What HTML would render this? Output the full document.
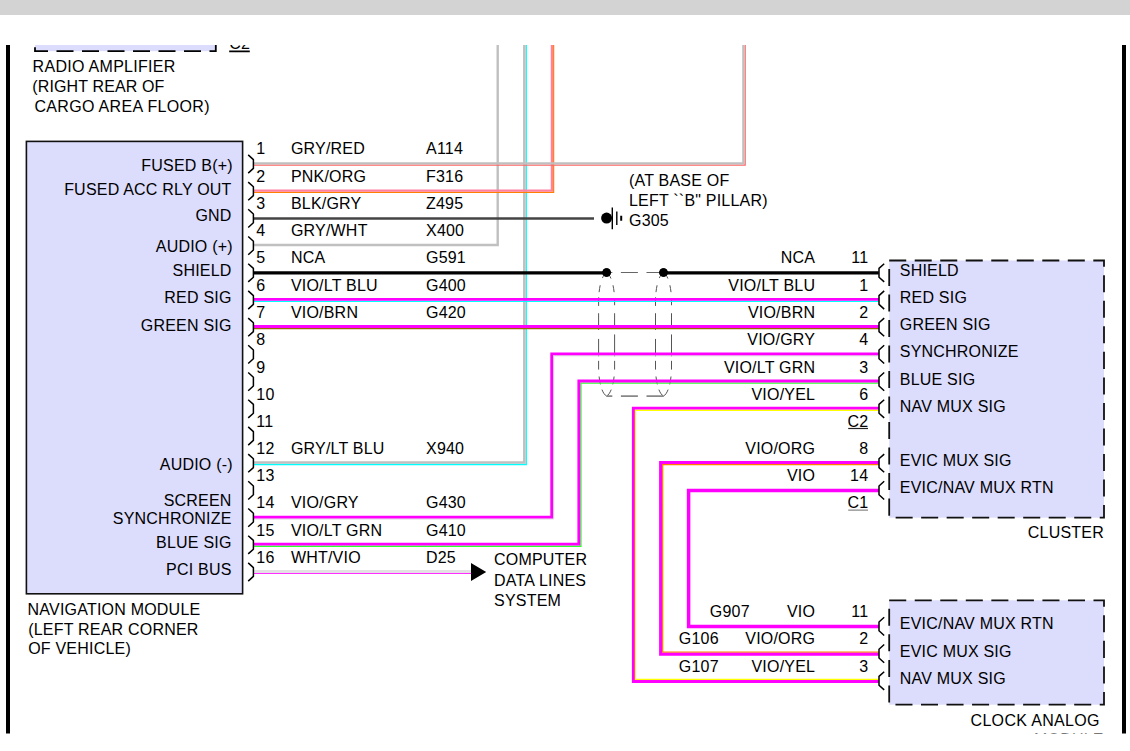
<!DOCTYPE html>
<html><head><meta charset="utf-8"><title>Wiring diagram</title>
<style>
html,body{margin:0;padding:0;background:#fff;}
body{width:1130px;height:751px;position:relative;overflow:hidden;font-family:"Liberation Sans",sans-serif;}
svg text{white-space:pre;letter-spacing:0.21px;}
</style></head><body>
<svg width="1130" height="751" viewBox="0 0 1130 751" style="position:absolute;left:0;top:0">
<defs><clipPath id="c"><rect x="0" y="45.0" width="1130" height="688.6"/></clipPath></defs>
<rect x="0" y="0" width="1130" height="15" fill="#d3d3d3"/>
<g clip-path="url(#c)" font-family="'Liberation Sans', sans-serif" font-size="16px" fill="#000">
<rect x="6" y="40" width="4" height="700" fill="#000"/>
<rect x="1122" y="40" width="4" height="700" fill="#000"/>
<rect x="35.0" y="40" width="180.8" height="11.20" fill="#dcdcfc"/>
<path d="M35.0,43 L35.0,51.2 L215.8,51.2 L215.8,40" fill="none" stroke="#000" stroke-width="1.8" stroke-dasharray="17 8.5" stroke-dashoffset="-4.2"/>
<rect x="26.4" y="141.4" width="216.2" height="452.4" fill="#dcdcfc" stroke="#111" stroke-width="1.6"/>
<rect x="889.20" y="260.50" width="214.80" height="257.20" fill="#dcdcfc"/>
<path d="M889.20,260.50 L1104.00,260.50 L1104.00,517.70 L889.20,517.70 L889.20,260.50" fill="none" stroke="#111" stroke-width="1.8" pathLength="37" stroke-dasharray="0.667 0.333"/>
<rect x="889.20" y="600.30" width="214.80" height="104.40" fill="#dcdcfc"/>
<path d="M889.20,600.30 L1104.00,600.30 L1104.00,704.70 L889.20,704.70 L889.20,600.30" fill="none" stroke="#111" stroke-width="1.8" pathLength="25" stroke-dasharray="0.667 0.333"/>
<path d="M606.60,272.60 C602.10,275.10 599.00,285.60 598.60,299.60 L598.60,369.10 C599.00,383.10 602.10,393.60 606.60,396.10" fill="none" stroke="#555" stroke-width="1" stroke-dasharray="7.15 7.54 6.90 5.12 8.53 7.30 16.68 9.03 17.38 4.52 8.76 6.79 7.90 5.44 8.44 50.00"/>
<path d="M606.60,272.60 C611.10,275.10 614.20,285.60 614.60,299.60 L614.60,369.10 C614.20,383.10 611.10,393.60 606.60,396.10" fill="none" stroke="#555" stroke-width="1" stroke-dasharray="7.66 7.03 6.90 5.94 7.02 7.99 12.51 8.69 21.89 4.52 8.76 6.79 7.90 5.44 8.44 50.00"/>
<path d="M663.50,272.60 C659.00,275.10 655.90,285.60 655.50,299.60 L655.50,369.10 C655.90,383.10 659.00,393.60 663.50,396.10" fill="none" stroke="#555" stroke-width="1" stroke-dasharray="7.15 7.54 6.90 5.12 8.53 7.30 16.68 9.03 17.38 4.52 8.76 6.79 7.90 5.44 8.44 50.00"/>
<path d="M663.50,272.60 C668.00,275.10 671.10,285.60 671.50,299.60 L671.50,369.10 C671.10,383.10 668.00,393.60 663.50,396.10" fill="none" stroke="#555" stroke-width="1" stroke-dasharray="7.66 7.03 6.90 5.94 7.02 7.99 12.51 8.69 21.89 4.52 8.76 6.79 7.90 5.44 8.44 50.00"/>
<path d="M663.5,272.5 H606.6" stroke="#666" stroke-width="1.2" stroke-dasharray="17 8.6"/>
<path d="M663.5,396.1 H606.6" stroke="#888" stroke-width="1.8" stroke-dasharray="17 8.6"/>
<circle cx="606.6" cy="272.5" r="4.3" fill="#000"/>
<circle cx="663.5" cy="272.5" r="4.3" fill="#000"/>
<polyline points="253.50,246.80 499.50,246.80 499.50,40.00" fill="none" stroke="#ffffff" stroke-width="1.20" stroke-linejoin="miter" />
<polyline points="253.50,245.00 497.70,245.00 497.70,40.00" fill="none" stroke="#c0c0c0" stroke-width="2.40" stroke-linejoin="miter" />
<polyline points="253.50,464.50 526.30,464.50 526.30,40.00" fill="none" stroke="#00ffff" stroke-width="1.30" stroke-linejoin="miter" />
<polyline points="253.50,462.55 524.35,462.55 524.35,40.00" fill="none" stroke="#c0c0c0" stroke-width="2.60" stroke-linejoin="miter" />
<polyline points="253.50,192.35 553.65,192.35 553.65,40.00" fill="none" stroke="#ff8000" stroke-width="1.20" stroke-linejoin="miter" />
<polyline points="253.50,190.60 551.90,190.60 551.90,40.00" fill="none" stroke="#ff80a0" stroke-width="2.30" stroke-linejoin="miter" />
<polyline points="253.50,165.15 745.15,165.15 745.15,40.00" fill="none" stroke="#ff6464" stroke-width="1.30" stroke-linejoin="miter" />
<polyline points="253.50,163.35 743.35,163.35 743.35,40.00" fill="none" stroke="#c0c0c0" stroke-width="2.30" stroke-linejoin="miter" />
<polyline points="253.50,218.40 594.00,218.40" fill="none" stroke="#444444" stroke-width="2.50" stroke-linejoin="miter" />
<polyline points="253.50,272.80 606.60,272.80" fill="none" stroke="#000" stroke-width="3.20" stroke-linejoin="miter" />
<polyline points="663.50,272.80 878.80,272.80" fill="none" stroke="#000" stroke-width="3.20" stroke-linejoin="miter" />
<polyline points="253.50,301.40 878.80,301.40" fill="none" stroke="#00ffff" stroke-width="1.40" stroke-linejoin="miter" />
<polyline points="253.50,299.30 878.80,299.30" fill="none" stroke="#ff00ff" stroke-width="2.80" stroke-linejoin="miter" />
<polyline points="253.50,328.60 878.80,328.60" fill="none" stroke="#996600" stroke-width="1.40" stroke-linejoin="miter" />
<polyline points="253.50,326.50 878.80,326.50" fill="none" stroke="#ff00ff" stroke-width="2.80" stroke-linejoin="miter" />
<polyline points="253.50,519.00 553.60,519.00 553.60,355.80 878.80,355.80" fill="none" stroke="#d8d8d8" stroke-width="1.00" stroke-linejoin="miter" />
<polyline points="253.50,517.10 551.70,517.10 551.70,353.90 878.80,353.90" fill="none" stroke="#ff00ff" stroke-width="2.80" stroke-linejoin="miter" />
<polyline points="253.50,546.25 580.95,546.25 580.95,383.05 878.80,383.05" fill="none" stroke="#30ff30" stroke-width="1.30" stroke-linejoin="miter" />
<polyline points="253.50,544.15 578.85,544.15 578.85,380.95 878.80,380.95" fill="none" stroke="#ff00ff" stroke-width="2.90" stroke-linejoin="miter" />
<polyline points="253.50,573.30 472.00,573.30" fill="none" stroke="#ff30ff" stroke-width="1.30" stroke-linejoin="miter" />
<polyline points="253.50,571.35 472.00,571.35" fill="none" stroke="#e2e2e2" stroke-width="2.60" stroke-linejoin="miter" />
<polyline points="878.80,679.35 635.45,679.35 635.45,410.25 878.80,410.25" fill="none" stroke="#ffff00" stroke-width="1.30" stroke-linejoin="miter" />
<polyline points="878.80,681.45 633.35,681.45 633.35,408.15 878.80,408.15" fill="none" stroke="#ff00ff" stroke-width="2.90" stroke-linejoin="miter" />
<polyline points="878.80,652.15 662.65,652.15 662.65,464.65 878.80,464.65" fill="none" stroke="#ff8000" stroke-width="1.30" stroke-linejoin="miter" />
<polyline points="878.80,654.25 660.55,654.25 660.55,462.55 878.80,462.55" fill="none" stroke="#ff00ff" stroke-width="2.90" stroke-linejoin="miter" />
<polyline points="878.80,626.40 688.60,626.40 688.60,490.40 878.80,490.40" fill="none" stroke="#ff00ff" stroke-width="3.50" stroke-linejoin="miter" />
<circle cx="606.6" cy="272.5" r="4.3" fill="#000"/>
<circle cx="663.5" cy="272.5" r="4.3" fill="#000"/>
<circle cx="606.6" cy="218.1" r="5.5" fill="#000"/>
<path d="M612.3,207.5V229.2" stroke="#000" stroke-width="1.4"/>
<path d="M616.8,211.5V224.9" stroke="#000" stroke-width="1.4"/>
<path d="M621.2,215.8V220.8" stroke="#000" stroke-width="2"/>
<path d="M248.2,154.90 L253.4,159.60 L253.4,168.40 L248.2,173.10" fill="none" stroke="#000" stroke-width="1.5" stroke-linejoin="round"/>
<path d="M248.2,182.10 L253.4,186.80 L253.4,195.60 L248.2,200.30" fill="none" stroke="#000" stroke-width="1.5" stroke-linejoin="round"/>
<path d="M248.2,209.30 L253.4,214.00 L253.4,222.80 L248.2,227.50" fill="none" stroke="#000" stroke-width="1.5" stroke-linejoin="round"/>
<path d="M248.2,236.50 L253.4,241.20 L253.4,250.00 L248.2,254.70" fill="none" stroke="#000" stroke-width="1.5" stroke-linejoin="round"/>
<path d="M248.2,263.70 L253.4,268.40 L253.4,277.20 L248.2,281.90" fill="none" stroke="#000" stroke-width="1.5" stroke-linejoin="round"/>
<path d="M248.2,290.90 L253.4,295.60 L253.4,304.40 L248.2,309.10" fill="none" stroke="#000" stroke-width="1.5" stroke-linejoin="round"/>
<path d="M248.2,318.10 L253.4,322.80 L253.4,331.60 L248.2,336.30" fill="none" stroke="#000" stroke-width="1.5" stroke-linejoin="round"/>
<path d="M248.2,345.30 L253.4,350.00 L253.4,358.80 L248.2,363.50" fill="none" stroke="#000" stroke-width="1.5" stroke-linejoin="round"/>
<path d="M248.2,372.50 L253.4,377.20 L253.4,386.00 L248.2,390.70" fill="none" stroke="#000" stroke-width="1.5" stroke-linejoin="round"/>
<path d="M248.2,399.70 L253.4,404.40 L253.4,413.20 L248.2,417.90" fill="none" stroke="#000" stroke-width="1.5" stroke-linejoin="round"/>
<path d="M248.2,426.90 L253.4,431.60 L253.4,440.40 L248.2,445.10" fill="none" stroke="#000" stroke-width="1.5" stroke-linejoin="round"/>
<path d="M248.2,454.10 L253.4,458.80 L253.4,467.60 L248.2,472.30" fill="none" stroke="#000" stroke-width="1.5" stroke-linejoin="round"/>
<path d="M248.2,481.30 L253.4,486.00 L253.4,494.80 L248.2,499.50" fill="none" stroke="#000" stroke-width="1.5" stroke-linejoin="round"/>
<path d="M248.2,508.50 L253.4,513.20 L253.4,522.00 L248.2,526.70" fill="none" stroke="#000" stroke-width="1.5" stroke-linejoin="round"/>
<path d="M248.2,535.70 L253.4,540.40 L253.4,549.20 L248.2,553.90" fill="none" stroke="#000" stroke-width="1.5" stroke-linejoin="round"/>
<path d="M248.2,562.90 L253.4,567.60 L253.4,576.40 L248.2,581.10" fill="none" stroke="#000" stroke-width="1.5" stroke-linejoin="round"/>
<path d="M884.2,263.70 L879.0,268.40 L879.0,277.20 L884.2,281.90" fill="none" stroke="#000" stroke-width="1.5" stroke-linejoin="round"/>
<path d="M884.2,290.90 L879.0,295.60 L879.0,304.40 L884.2,309.10" fill="none" stroke="#000" stroke-width="1.5" stroke-linejoin="round"/>
<path d="M884.2,318.10 L879.0,322.80 L879.0,331.60 L884.2,336.30" fill="none" stroke="#000" stroke-width="1.5" stroke-linejoin="round"/>
<path d="M884.2,345.30 L879.0,350.00 L879.0,358.80 L884.2,363.50" fill="none" stroke="#000" stroke-width="1.5" stroke-linejoin="round"/>
<path d="M884.2,372.50 L879.0,377.20 L879.0,386.00 L884.2,390.70" fill="none" stroke="#000" stroke-width="1.5" stroke-linejoin="round"/>
<path d="M884.2,399.70 L879.0,404.40 L879.0,413.20 L884.2,417.90" fill="none" stroke="#000" stroke-width="1.5" stroke-linejoin="round"/>
<path d="M884.2,454.10 L879.0,458.80 L879.0,467.60 L884.2,472.30" fill="none" stroke="#000" stroke-width="1.5" stroke-linejoin="round"/>
<path d="M884.2,481.30 L879.0,486.00 L879.0,494.80 L884.2,499.50" fill="none" stroke="#000" stroke-width="1.5" stroke-linejoin="round"/>
<path d="M884.2,617.30 L879.0,622.00 L879.0,630.80 L884.2,635.50" fill="none" stroke="#000" stroke-width="1.5" stroke-linejoin="round"/>
<path d="M884.2,644.50 L879.0,649.20 L879.0,658.00 L884.2,662.70" fill="none" stroke="#000" stroke-width="1.5" stroke-linejoin="round"/>
<path d="M884.2,671.70 L879.0,676.40 L879.0,685.20 L884.2,689.90" fill="none" stroke="#000" stroke-width="1.5" stroke-linejoin="round"/>
<path d="M471.0,563.0 L486.2,572.0 L471.0,581.0 Z" fill="#000"/>
<text x="229.2" y="49.4">C2</text>
<path d="M229.2,51.3 H249.8" stroke="#000" stroke-width="1.8"/>
<text x="32.6" y="72.0" style="letter-spacing:0.29px">RADIO AMPLIFIER</text>
<text x="32.3" y="91.9" style="letter-spacing:0.13px">(RIGHT REAR OF</text>
<text x="34.4" y="111.8" style="letter-spacing:0.33px">CARGO AREA FLOOR)</text>
<text x="232.8" y="170.6" text-anchor="end">FUSED B(+)</text>
<text x="231.6" y="194.6" text-anchor="end">FUSED ACC RLY OUT</text>
<text x="231.6" y="221.4" text-anchor="end">GND</text>
<text x="232.8" y="252.0" text-anchor="end">AUDIO (+)</text>
<text x="231.6" y="275.8" text-anchor="end">SHIELD</text>
<text x="231.6" y="302.8" text-anchor="end">RED SIG</text>
<text x="231.6" y="330.6" text-anchor="end">GREEN SIG</text>
<text x="232.8" y="469.8" text-anchor="end">AUDIO (-)</text>
<text x="231.6" y="505.6" text-anchor="end">SCREEN</text>
<text x="231.6" y="523.8" text-anchor="end">SYNCHRONIZE</text>
<text x="231.6" y="547.6" text-anchor="end">BLUE SIG</text>
<text x="231.6" y="575.2" text-anchor="end">PCI BUS</text>
<text x="27.6" y="614.5">NAVIGATION MODULE</text>
<text x="28.2" y="634.6">(LEFT REAR CORNER</text>
<text x="28.2" y="653.9">OF VEHICLE)</text>
<text x="256.3" y="154.0">1</text>
<text x="290.9" y="154.0">GRY/RED</text>
<text x="426.0" y="154.0">A114</text>
<text x="256.3" y="182.0">2</text>
<text x="290.9" y="182.0">PNK/ORG</text>
<text x="426.0" y="182.0">F316</text>
<text x="256.3" y="209.0">3</text>
<text x="290.9" y="209.0">BLK/GRY</text>
<text x="426.0" y="209.0">Z495</text>
<text x="256.3" y="236.0">4</text>
<text x="290.9" y="236.0">GRY/WHT</text>
<text x="426.0" y="236.0">X400</text>
<text x="256.3" y="263.0">5</text>
<text x="290.9" y="263.0">NCA</text>
<text x="426.0" y="263.0">G591</text>
<text x="256.3" y="291.0">6</text>
<text x="290.9" y="291.0">VIO/LT BLU</text>
<text x="426.0" y="291.0">G400</text>
<text x="256.3" y="318.0">7</text>
<text x="290.9" y="318.0">VIO/BRN</text>
<text x="426.0" y="318.0">G420</text>
<text x="256.3" y="345.0">8</text>
<text x="256.3" y="373.0">9</text>
<text x="256.3" y="400.0">10</text>
<text x="256.3" y="427.0">11</text>
<text x="256.3" y="454.0">12</text>
<text x="290.9" y="454.0">GRY/LT BLU</text>
<text x="426.0" y="454.0">X940</text>
<text x="256.3" y="481.0">13</text>
<text x="256.3" y="508.0">14</text>
<text x="290.9" y="508.0">VIO/GRY</text>
<text x="426.0" y="508.0">G430</text>
<text x="256.3" y="536.0">15</text>
<text x="290.9" y="536.0">VIO/LT GRN</text>
<text x="426.0" y="536.0">G410</text>
<text x="256.3" y="563.0">16</text>
<text x="290.9" y="563.0">WHT/VIO</text>
<text x="426.0" y="563.0">D25</text>
<text x="629.0" y="186.0">(AT BASE OF</text>
<text x="629.0" y="205.8">LEFT ``B" PILLAR)</text>
<text x="629.0" y="226.0">G305</text>
<text x="494.0" y="564.7">COMPUTER</text>
<text x="494.0" y="585.5">DATA LINES</text>
<text x="494.0" y="605.5">SYSTEM</text>
<text x="815.2" y="262.8" text-anchor="end">NCA</text>
<text x="868.3" y="262.8" text-anchor="end">11</text>
<text x="815.2" y="290.8" text-anchor="end">VIO/LT BLU</text>
<text x="868.3" y="290.8" text-anchor="end">1</text>
<text x="815.2" y="317.8" text-anchor="end">VIO/BRN</text>
<text x="868.3" y="317.8" text-anchor="end">2</text>
<text x="815.2" y="344.8" text-anchor="end">VIO/GRY</text>
<text x="868.3" y="344.8" text-anchor="end">4</text>
<text x="815.2" y="372.8" text-anchor="end">VIO/LT GRN</text>
<text x="868.3" y="372.8" text-anchor="end">3</text>
<text x="815.2" y="399.8" text-anchor="end">VIO/YEL</text>
<text x="868.3" y="399.8" text-anchor="end">6</text>
<text x="815.2" y="453.8" text-anchor="end">VIO/ORG</text>
<text x="868.3" y="453.8" text-anchor="end">8</text>
<text x="815.2" y="480.8" text-anchor="end">VIO</text>
<text x="868.3" y="480.8" text-anchor="end">14</text>
<text x="815.2" y="616.5" text-anchor="end">VIO</text>
<text x="868.3" y="616.5" text-anchor="end">11</text>
<text x="709.8" y="616.5">G907</text>
<text x="815.2" y="643.8" text-anchor="end">VIO/ORG</text>
<text x="868.3" y="643.8" text-anchor="end">2</text>
<text x="678.8" y="643.8">G106</text>
<text x="815.2" y="671.5" text-anchor="end">VIO/YEL</text>
<text x="868.3" y="671.5" text-anchor="end">3</text>
<text x="678.8" y="671.5">G107</text>
<text x="847.6" y="426.5">C2</text>
<path d="M848.2,428.5 H868.0" stroke="#222" stroke-width="1.2"/>
<text x="847.6" y="507.5">C1</text>
<path d="M848.2,510.1 H868.0" stroke="#8a8a8a" stroke-width="1.4"/>
<text x="899.8" y="275.7">SHIELD</text>
<text x="899.8" y="302.9">RED SIG</text>
<text x="899.8" y="330.1">GREEN SIG</text>
<text x="899.8" y="357.3">SYNCHRONIZE</text>
<text x="899.8" y="384.5">BLUE SIG</text>
<text x="899.8" y="411.7">NAV MUX SIG</text>
<text x="899.8" y="466.1">EVIC MUX SIG</text>
<text x="899.8" y="493.3">EVIC/NAV MUX RTN</text>
<text x="899.8" y="629.3">EVIC/NAV MUX RTN</text>
<text x="899.8" y="656.5">EVIC MUX SIG</text>
<text x="899.8" y="683.7">NAV MUX SIG</text>
<text x="1027.8" y="537.9">CLUSTER</text>
<text x="970.5" y="725.6" style="letter-spacing:0.33px">CLOCK ANALOG</text>
<text x="1034.0" y="744.8">MODULE</text>
</g></svg>
</body></html>
